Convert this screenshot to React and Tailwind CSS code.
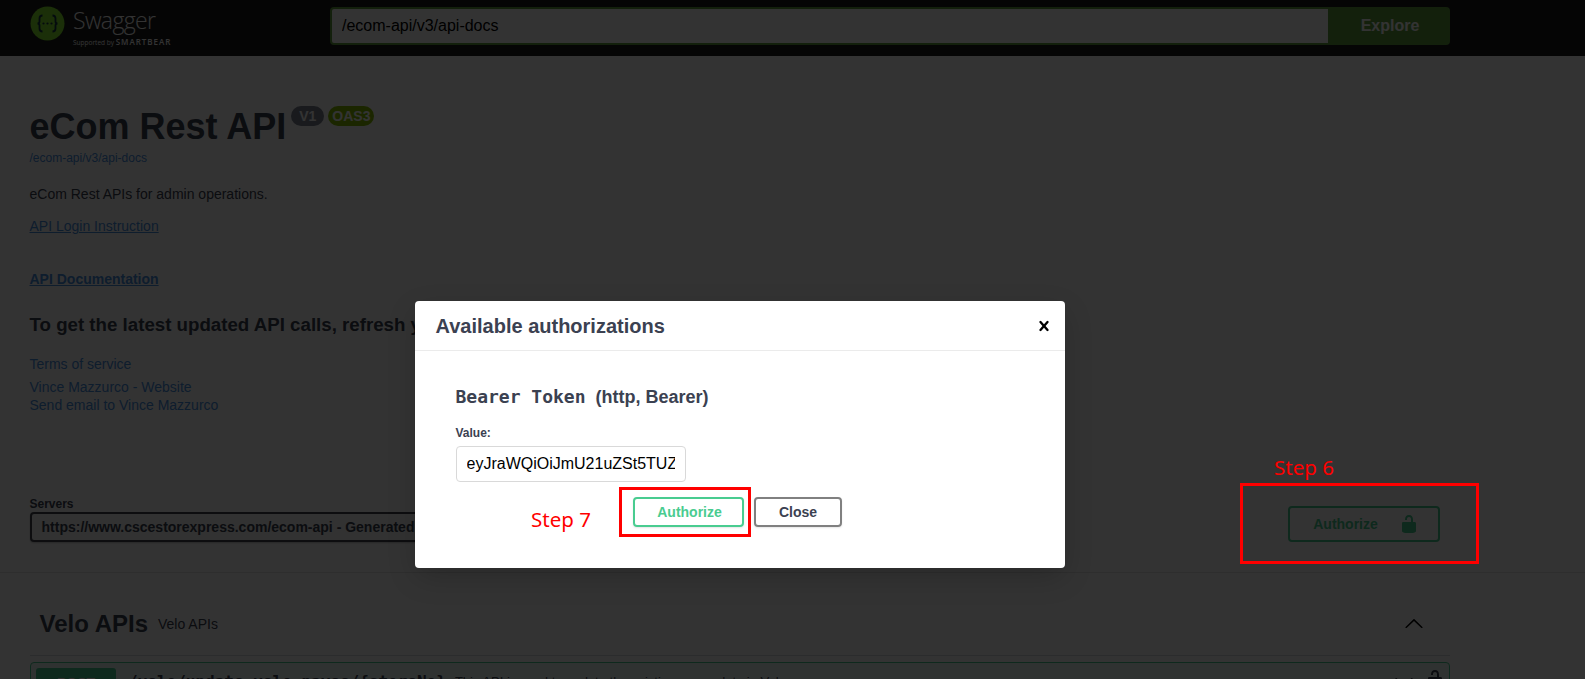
// App.jsx
function SwaggerLogo() {
  return (
    <div className="flex items-start">
      <svg width="35" height="35" viewBox="0 0 35 35" className="mt-[6px]">
        <circle cx="17.5" cy="17.5" r="17" fill="#85ea2d" />
        <path d="M12.5 9.5c-2.5 0-3 1.2-3 3v3c0 1.2-.7 2-2 2 1.3 0 2 .8 2 2v3c0 1.8.5 3 3 3M22.5 9.5c2.5 0 3 1.2 3 3v3c0 1.2.7 2 2 2-1.3 0-2 .8-2 2v3c0 1.8-.5 3-3 3" fill="none" stroke="#173647" strokeWidth="1.8" />
        <circle cx="13.5" cy="17.5" r="1.1" fill="#173647" />
        <circle cx="17.5" cy="17.5" r="1.1" fill="#173647" />
        <circle cx="21.5" cy="17.5" r="1.1" fill="#173647" />
      </svg>
      <div className="ml-2 flex flex-col font-['Open_Sans',sans-serif] text-white">
        <span className="mt-[6px] text-[23px] leading-[29px] font-light tracking-[-0.65px]">Swagger</span>
        <span className="mt-[3px] text-[6.5px] leading-[8px] whitespace-nowrap">
          Supported by <span className="text-[8px] font-semibold tracking-[1px]">SMARTBEAR</span>
        </span>
      </div>
    </div>
  );
}

function LockIcon({ className, size = 20 }) {
  return (
    <svg width={size} height={size} viewBox="0 0 20 20" className={className} fill="currentColor">
      <path d="M15.8 8H14V5.6C14 2.703 12.665 1 10 1 7.334 1 6 2.703 6 5.6V6h2v-.801C8 3.754 8.797 3 10 3c1.203 0 2 .754 2 2.199V8H4c-.553 0-1 .646-1 1.199V17c0 .549.428 1.139.951 1.307l1.197.387C5.672 18.861 6.55 19 7.1 19h5.8c.549 0 1.428-.139 1.951-.307l1.196-.387c.524-.167.953-.757.953-1.306V9.199C17 8.646 16.352 8 15.8 8z" />
    </svg>
  );
}

export default function App() {
  return (
    <div className="relative h-[679px] overflow-hidden bg-white font-['Liberation_Sans',sans-serif] text-[#3b4151]">
      {/* top bar */}
      <div className="flex h-[56px] items-start bg-[#1b1b1b] pl-[30px] pr-[135px]">
        <div className="w-[300px]">
          <SwaggerLogo />
        </div>
        <div className="mt-[7px] flex h-[38px] flex-1">
          <input readOnly value="/ecom-api/v3/api-docs" className="h-full flex-1 rounded-l-[4px] border-2 border-[#62a03f] bg-white px-[10px] text-[16px] text-black outline-none" />
          <button className="w-[120px] rounded-r-[4px] bg-[#62a03f] text-[16px] font-bold text-white">Explore</button>
        </div>
      </div>

      {/* api info */}
      <div className="h-[517px] border-b border-[#e5e5e5] pt-[47px] pl-[29.5px] pr-[30px]">
        <div className="mb-[1px] flex items-start">
          <h1 className="text-[36px] leading-[47px] font-bold">eCom Rest API</h1>
          <span className="mt-[3px] ml-[5px] h-[20px] rounded-[57px] bg-[#7d8492] px-[8px] text-[14px] leading-[20px] font-bold text-white">V1</span>
          <span className="mt-[3px] ml-[4px] h-[20px] rounded-[57px] bg-[#89bf04] px-[4px] text-[14px] leading-[20px] font-bold text-white">OAS3</span>
        </div>
        <a className="block text-[12px] leading-[15px] text-[#4990e2]">/ecom-api/v3/api-docs</a>
        <p className="mt-[20px] text-[14px] leading-[17px]">eCom Rest APIs for admin operations.</p>
        <a className="mt-[15px] block text-[14px] leading-[17px] text-[#4990e2] underline">API Login Instruction</a>
        <a className="mt-[36px] block text-[14px] leading-[17px] font-bold text-[#4990e2] underline">API Documentation</a>
        <h3 className="mt-[25px] text-[18.7px] leading-[23px] font-bold whitespace-nowrap">To get the latest updated API calls, refresh your browser</h3>
        <a className="mt-[19px] block text-[14px] leading-[18px] text-[#4990e2]">Terms of service</a>
        <a className="mt-[5px] block text-[14px] leading-[18px] text-[#4990e2]">Vince Mazzurco - Website</a>
        <a className="block text-[14px] leading-[18px] text-[#4990e2]">Send email to Vince Mazzurco</a>

        <div className="mt-[83px] flex items-start justify-between pr-[115.5px]">
          <div>
            <div className="text-[12px] leading-[15px] font-bold">Servers</div>
            <div className="flex h-[30px] w-[560px] items-center rounded-[4px] border-2 border-[#41444e] bg-[#f7f7f7] px-[10px] text-[14px] font-bold whitespace-nowrap shadow-[0_1px_2px_rgba(0,0,0,0.25)]">
              https://www.cscestorexpress.com/ecom-api - Generated server url
            </div>
          </div>
          <button className="mt-[9px] flex h-[36px] w-[152px] items-center justify-center gap-[21px] rounded-[4px] border-2 border-[#49cc90] pl-[5px] text-[14px] font-bold text-[#49cc90]">
            Authorize
            <LockIcon />
          </button>
        </div>
      </div>

      {/* tag section */}
      <div className="pl-[30px] pr-[135px]">
        <div className="flex h-[83px] items-center border-b border-[#d8dade] pt-[20px] pl-[9.5px] pr-[26px]">
          <h3 className="text-[24px] font-bold">Velo APIs</h3>
          <span className="ml-[10px] text-[14px]">Velo APIs</span>
          <svg width="20" height="20" viewBox="0 0 20 20" className="mt-[-3px] ml-auto text-black" fill="currentColor">
            <path d="M 17.418 14.908 C 17.69 15.172 18.127 15.172 18.397 14.908 C 18.667 14.645 18.668 14.219 18.397 13.956 L 10.489 6.198 C 10.219 5.934 9.782 5.934 9.51 6.198 L 1.602 13.956 C 1.332 14.219 1.332 14.645 1.602 14.908 C 1.873 15.172 2.311 15.172 2.581 14.908 L 10 7.99 L 17.418 14.908 Z" />
          </svg>
        </div>
        <div className="mt-[6px] flex h-[42px] items-start rounded-[4px] border border-[#49cc90] bg-[#49cc90]/10 pt-[5px] pl-[5px] pr-[4px]">
          <span className="flex h-[30px] w-[80px] items-center justify-center rounded-[3px] bg-[#49cc90] text-[14px] font-bold text-white">POST</span>
          <span className="mt-[2px] ml-[12px] font-['DejaVu_Sans_Mono',monospace] text-[16px] font-bold whitespace-nowrap">/velo/update-velo-payee/{"{storeNo}"}</span>
          <span className="mt-[4px] ml-[9px] text-[13px] whitespace-nowrap">This API is used to update the existing payee data in Velo</span>
          <svg width="20" height="20" viewBox="0 0 20 20" className="mt-[4px] mr-[11px] ml-auto text-[#3b4151]" fill="currentColor">
            <path d="M17.418 6.109c.272-.268.709-.268.979 0s.271.701 0 .969l-7.908 7.83c-.27.268-.707.268-.979 0l-7.908-7.83c-.27-.268-.27-.701 0-.969.271-.268.709-.268.979 0L10 13.25l7.418-7.141z" />
          </svg>
          <LockIcon className="mt-[1px]" />
        </div>
      </div>

      {/* dim backdrop */}
      <div className="absolute inset-0 bg-black/80" />

      {/* modal */}
      <div className="absolute top-[301px] left-[415px] h-[267px] w-[650px] rounded-[4px] bg-white shadow-[0_10px_30px_-2px_rgba(0,0,0,0.2)]">
        <div className="flex h-[50px] items-center justify-between border-b border-[#ebebeb] pl-[20.5px] pr-[11px]">
          <h3 className="text-[20px] font-bold">Available authorizations</h3>
          <svg width="20" height="20" viewBox="0 0 20 20" fill="#000">
            <path d="M14.348 14.849a1.2 1.2 0 0 1-1.697 0L10 11.819l-2.651 3.029a1.2 1.2 0 1 1-1.697-1.697l2.758-3.15-2.759-3.152a1.2 1.2 0 1 1 1.697-1.697L10 8.183l2.651-3.031a1.2 1.2 0 1 1 1.697 1.697l-2.758 3.152 2.758 3.15a1.2 1.2 0 0 1 0 1.698z" />
          </svg>
        </div>
        <div className="px-[40.5px] pt-[34px]">
          <h4 className="text-[18px] leading-[24px] font-bold">
            <code className="font-['DejaVu_Sans_Mono',monospace]">Bearer Token</code>
            <span className="ml-[10px] text-[18px]">(http, Bearer)</span>
          </h4>
          <div className="mt-[17px] text-[12px] leading-[15px] font-bold">Value:</div>
          <input readOnly value="eyJraWQiOiJmU21uZSt5TUZ" className="mt-[5px] h-[36px] w-[230px] rounded-[4px] border border-[#d9d9d9] bg-white px-[10px] text-[16px] text-black outline-none" />
          <div className="mt-[15px] flex gap-[10px] pl-[177.5px]">
            <button className="h-[30px] w-[111px] rounded-[4px] border-2 border-[#49cc90] pl-[2px] text-[14px] font-bold text-[#49cc90] shadow-[0_1px_2px_rgba(0,0,0,0.1)]">Authorize</button>
            <button className="h-[30px] w-[88px] rounded-[4px] border-2 border-[#808080] text-[14px] font-bold shadow-[0_1px_2px_rgba(0,0,0,0.1)]">Close</button>
          </div>
        </div>
      </div>

      {/* red screenshot annotations */}
      <div className="absolute top-[487px] left-[619px] h-[50px] w-[132px] border-[3px] border-[#ff0000]" />
      <div className="absolute top-[505px] left-[531px] font-['Noto_Sans',sans-serif] text-[20.5px] leading-[28px] text-[#ff0000]">Step 7</div>
      <div className="absolute top-[483px] left-[1240px] h-[81px] w-[239px] border-[3px] border-[#ff0000]" />
      <div className="absolute top-[453px] left-[1274px] font-['Noto_Sans',sans-serif] text-[20.5px] leading-[28px] text-[#ff0000]">Step 6</div>
    </div>
  );
}
